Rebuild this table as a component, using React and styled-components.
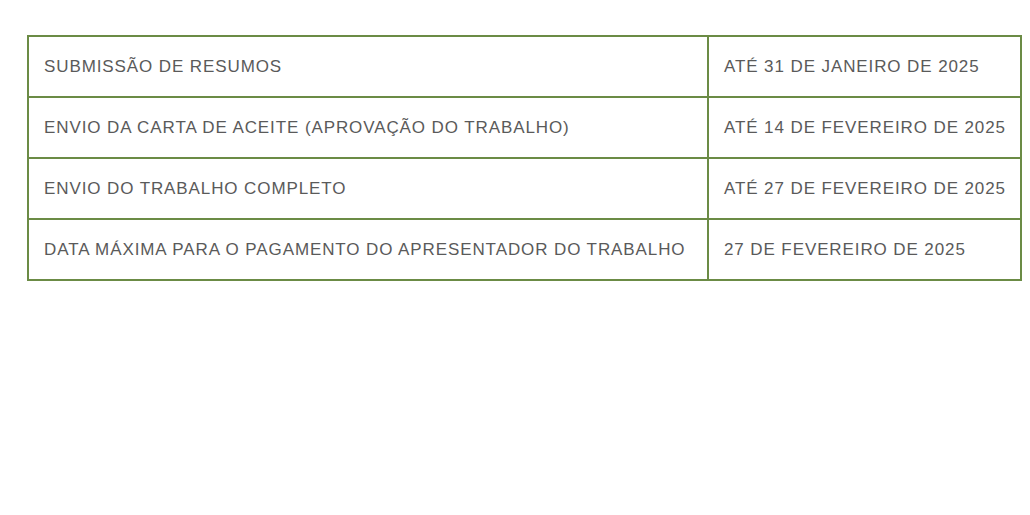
import React from 'react'
import styled, { createGlobalStyle } from 'styled-components'

const GlobalStyle = createGlobalStyle`
  body {
    margin: 0;
    background: #fff;
    font-family: "Liberation Sans", Arial, sans-serif;
  }
`

const Page = styled.div`
  padding: 35px 0 0 27px;
`

const Table = styled.table`
  width: 995px;
  border-collapse: collapse;
  border: 2px solid #6b8b45;
  table-layout: fixed;
`

const Cell = styled.td`
  height: 59px;
  padding: 0 0 0 15px;
  border: 2px solid #6b8b45;
  color: #5a5a5a;
  font-size: 17px;
  letter-spacing: 0.9px;
  text-transform: uppercase;
  white-space: nowrap;
  vertical-align: middle;
  width: ${props => (props.wide ? '663px' : 'auto')};
`

const rows = [
  ['Submissão de resumos', 'Até 31 de janeiro de 2025'],
  ['Envio da carta de aceite (aprovação do trabalho)', 'Até 14 de fevereiro de 2025'],
  ['Envio do trabalho completo', 'Até 27 de fevereiro de 2025'],
  ['Data máxima para o pagamento do apresentador do trabalho', '27 de fevereiro de 2025'],
]

function App() {
  return (
    <Page>
      <GlobalStyle />
      <Table>
        <tbody>
          {rows.map(([task, date]) => (
            <tr key={task}>
              <Cell wide>{task}</Cell>
              <Cell>{date}</Cell>
            </tr>
          ))}
        </tbody>
      </Table>
    </Page>
  )
}

export default App
